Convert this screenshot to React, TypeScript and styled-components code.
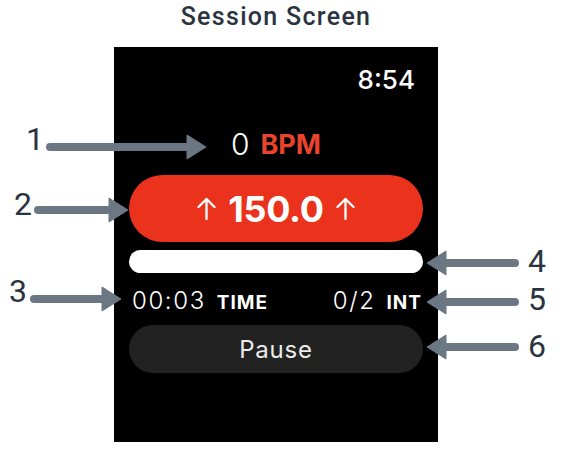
import React from "react";
import styled, { createGlobalStyle } from "styled-components";

const Global = createGlobalStyle`
  html, body { margin: 0; padding: 0; background: #ffffff; }
  body { font-family: Inter, "Liberation Sans", sans-serif; }
`;

const Page = styled.div`
  position: relative;
  width: 563px;
  height: 451px;
  overflow: hidden;
  background: #ffffff;
`;

const Title = styled.div`
  width: 324px;
  margin-left: 114px;
  height: 47px;
  padding-top: 3px;
  box-sizing: border-box;
  text-align: center;
  font-family: Roboto, "Noto Sans", sans-serif;
  font-weight: 500;
  font-size: 25px;
  line-height: 28px;
  letter-spacing: 1.3px;
  color: #2b3340;
`;

const Watch = styled.div`
  width: 324px;
  height: 395px;
  margin-left: 114px;
  background: #000000;
  display: flex;
  flex-direction: column;
  padding: 0 15px;
  box-sizing: border-box;
  font-family: Inter, "Liberation Sans", sans-serif;
  color: #ffffff;
`;

const StatusBar = styled.div`
  height: 77px;
  padding-top: 20px;
  padding-right: 8px;
  box-sizing: border-box;
  display: flex;
  justify-content: flex-end;
`;

const Clock = styled.span`
  font-size: 26px;
  line-height: 26px;
  font-weight: 500;
`;

const HeartRow = styled.div`
  height: 40px;
  display: flex;
  align-items: center;
  justify-content: center;
  gap: 11px;
`;

const HeartValue = styled.span`
  font-size: 30px;
  font-weight: 300;
  line-height: 1;
`;

const HeartUnit = styled.span`
  font-size: 27px;
  font-weight: 700;
  line-height: 1;
  color: #e8432d;
`;

const TargetPill = styled.div`
  margin-top: 11px;
  height: 67px;
  border-radius: 34px;
  background: #ea321c;
  display: flex;
  align-items: center;
  justify-content: center;
  gap: 12px;
`;

const TargetValue = styled.span`
  font-size: 36px;
  font-weight: 700;
  line-height: 1;
  letter-spacing: -0.3px;
`;

const ProgressTrack = styled.div`
  margin-top: 8px;
  height: 23px;
  border-radius: 12px;
  background: #ffffff;
`;

const StatsRow = styled.div`
  margin-top: 12px;
  height: 30px;
  padding: 0 1px 0 3px;
  display: flex;
  align-items: center;
  justify-content: space-between;
`;

const Stat = styled.div`
  display: flex;
  align-items: baseline;
  gap: 11px;
`;

const StatValue = styled.span`
  font-size: 24px;
  font-weight: 300;
  letter-spacing: 1.6px;
`;

const StatLabel = styled.span`
  font-size: 19px;
  font-weight: 700;
  letter-spacing: 1px;
`;

const PauseButton = styled.div`
  margin-top: 10px;
  height: 48px;
  border-radius: 24px;
  background: #222222;
  display: flex;
  align-items: center;
  justify-content: center;
  font-size: 24px;
  font-weight: 400;
  color: #ececec;
  letter-spacing: 0.8px;
`;

const Overlay = styled.svg`
  position: absolute;
  left: 0;
  top: 0;
  pointer-events: none;
`;

const Callout = styled.span<{ $x: number; $y: number }>`
  position: absolute;
  left: ${(p) => p.$x}px;
  top: ${(p) => p.$y}px;
  font-family: Roboto, "Noto Sans", sans-serif;
  font-weight: 400;
  font-size: 32px;
  line-height: 32px;
  color: #2a3441;
`;

const UpArrow = () => (
  <svg width="19" height="23" viewBox="0 0 19 23" fill="none">
    <path
      d="M9.5 22V2M1.5 10L9.5 2L17.5 10"
      stroke="#ffffff"
      strokeWidth="2.3"
      strokeLinecap="round"
      strokeLinejoin="round"
    />
  </svg>
);

type ArrowSpec = { tail: number; tip: number; y: number };

const arrows: ArrowSpec[] = [
  { tail: 50, tip: 206, y: 147 },
  { tail: 38, tip: 128, y: 210 },
  { tail: 34, tip: 121, y: 299 },
  { tail: 515, tip: 427, y: 263 },
  { tail: 515, tip: 427, y: 302 },
  { tail: 515, tip: 427, y: 347 },
];

const arrowPath = ({ tail, tip, y }: ArrowSpec) => {
  const dir = tip > tail ? 1 : -1;
  const headLen = 19;
  const half = 12;
  const base = tip - dir * headLen;
  return {
    shaft: `M${tail} ${y} L${base + dir * 2} ${y}`,
    head: `M${tip} ${y} L${base} ${y - half} L${base} ${y + half} Z`,
  };
};

const labels = [
  { n: "1", x: 26, y: 123 },
  { n: "2", x: 14, y: 188 },
  { n: "3", x: 9, y: 275 },
  { n: "4", x: 528, y: 245 },
  { n: "5", x: 528, y: 283 },
  { n: "6", x: 528, y: 330 },
];

export default function App() {
  return (
    <>
      <Global />
      <Page>
        <Title>Session Screen</Title>
        <Watch>
          <StatusBar>
            <Clock>8:54</Clock>
          </StatusBar>
          <HeartRow>
            <HeartValue>0</HeartValue>
            <HeartUnit>BPM</HeartUnit>
          </HeartRow>
          <TargetPill>
            <UpArrow />
            <TargetValue>150.0</TargetValue>
            <UpArrow />
          </TargetPill>
          <ProgressTrack />
          <StatsRow>
            <Stat>
              <StatValue>00:03</StatValue>
              <StatLabel>TIME</StatLabel>
            </Stat>
            <Stat>
              <StatValue>0/2</StatValue>
              <StatLabel>INT</StatLabel>
            </Stat>
          </StatsRow>
          <PauseButton>Pause</PauseButton>
        </Watch>
        <Overlay width="563" height="451" viewBox="0 0 563 451">
          {arrows.map((a, i) => {
            const p = arrowPath(a);
            return (
              <g key={i} fill="#6c7784" stroke="#6c7784">
                <path d={p.shaft} strokeWidth="8" strokeLinecap="round" fill="none" />
                <path d={p.head} strokeWidth="1" strokeLinejoin="round" />
              </g>
            );
          })}
        </Overlay>
        {labels.map((l) => (
          <Callout key={l.n} $x={l.x} $y={l.y}>
            {l.n}
          </Callout>
        ))}
      </Page>
    </>
  );
}
